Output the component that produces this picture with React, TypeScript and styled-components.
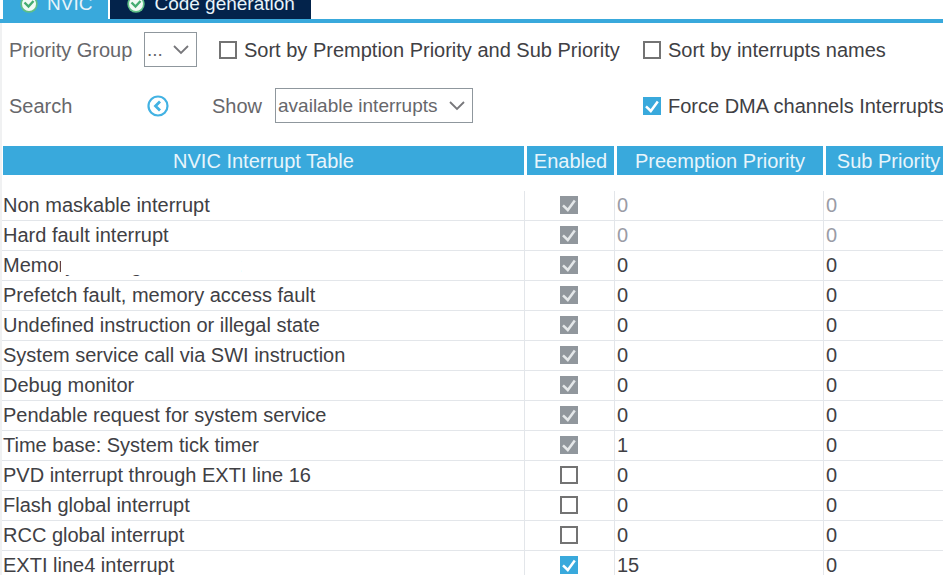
import React, { useState } from "react";
import styled, { createGlobalStyle } from "styled-components";

const BLUE = "#39a9dc";
const NAVY = "#03234b";
const INK = "#404044";
const MUTED = "#67676b";

const GlobalStyle = createGlobalStyle`
  *, *::before, *::after { box-sizing: border-box; }
  html, body { margin: 0; background: #fff; }
  body {
    font-family: "Liberation Sans", Arial, sans-serif;
    font-size: 20px;
    line-height: 24px;
    color: ${INK};
    overflow: hidden;
  }
`;

const TabStrip = styled.div`
  display: flex;
  align-items: flex-end;
  gap: 2px;
  height: 23px;
  padding-left: 3px;
  overflow: hidden;
  border-bottom: 4px solid ${BLUE};
`;

const Tab = styled.button<{ $active?: boolean }>`
  display: flex;
  flex: none;
  align-items: center;
  gap: 9px;
  height: 30px;
  padding: 0 16px 0 17px;
  border: 0;
  background: ${(p) => (p.$active ? BLUE : NAVY)};
  color: #e8f4fa;
  font: inherit;
  font-size: 19px;
  white-space: nowrap;
`;

const Panel = styled.main`
  border-left: 2px solid #f0f1f2;
`;

const Toolbar = styled.div`
  display: grid;
  grid-template-columns: 135px 68px 1fr 300px;
  row-gap: 21px;
  align-items: center;
  padding: 9px 0 23px 7px;
  white-space: nowrap;
`;

const Caption = styled.label`
  color: ${MUTED};
`;

const Group = styled.div`
  display: flex;
  align-items: center;
  gap: 13px;
`;

const Check = styled.label<{ $indent?: boolean }>`
  display: flex;
  align-items: center;
  gap: 7px;
  padding-left: ${(p) => (p.$indent ? 7 : 0)}px;
`;

const SelectBox = styled.span<{ $width: number }>`
  display: block;
  position: relative;
  width: ${(p) => p.$width}px;
  height: 35px;

  select {
    appearance: none;
    width: 100%;
    height: 100%;
    padding: 0 0 0 2px;
    border: 1px solid #8f979d;
    border-radius: 0;
    background: #fff;
    color: ${MUTED};
    font: inherit;
    font-size: 19px;
  }

  svg {
    position: absolute;
    top: 12px;
    right: 7px;
    pointer-events: none;
  }
`;

const IconButton = styled.button`
  display: flex;
  width: 22px;
  height: 22px;
  margin-left: 3px;
  padding: 0;
  border: 0;
  background: none;
`;

const TickHolder = styled.span<{ $centered?: boolean }>`
  display: grid;
  flex: none;
  width: 18px;
  height: 18px;
  margin: ${(p) => (p.$centered ? "0 auto" : "0")};

  input, svg { grid-area: 1 / 1; }
  svg { pointer-events: none; visibility: hidden; }
  input:checked + svg { visibility: visible; }

  input {
    appearance: none;
    width: 18px;
    height: 18px;
    margin: 0;
    border: 2px solid #737373;
    background: #fff;
  }
  input:checked { border: 0; background: ${BLUE}; }
  input:checked:disabled { background: #91979d; }
`;

const Table = styled.table`
  width: 100%;
  table-layout: fixed;
  border-collapse: separate;
  border-spacing: 0;
`;

const Column = styled.col<{ $width?: number }>`
  width: ${(p) => (p.$width ? `${p.$width}px` : "auto")};
`;

const HeadCell = styled.th`
  height: 45px;
  padding: 0;
  border: solid #fff;
  border-width: 0 1px 16px 2px;
  background: ${BLUE};
  color: #e8f5fb;
  font-weight: normal;
  white-space: nowrap;

  &:first-child { border-left-width: 1px; }
  &:last-child { border-right-width: 0; padding-left: 8px; }
`;

const Cell = styled.td<{ $center?: boolean; $dim?: boolean }>`
  height: 30px;
  padding: ${(p) => (p.$center ? "0 2px 2px 0" : "0 0 2px 2px")};
  border-right: 1px solid #e3e6ea;
  border-bottom: 1px solid #e3e6ea;
  color: ${(p) => (p.$dim ? "#9a9ca6" : INK)};
  white-space: nowrap;

  &:first-child { padding-left: 1px; }
  &:last-child { border-right: 0; }
`;

const Masked = styled.span`
  position: relative;

  &::after {
    content: "";
    position: absolute;
    inset: 0 0 1px 58px;
    background: #fff;
  }
`;

type TickProps = { checked: boolean; disabled?: boolean; label?: string; centered?: boolean };

function Tick({ checked, disabled, label, centered }: TickProps) {
  const [on, setOn] = useState(checked);
  return (
    <TickHolder $centered={centered}>
      <input
        type="checkbox"
        aria-label={label}
        checked={on}
        disabled={disabled}
        onChange={(e) => setOn(e.target.checked)}
      />
      <svg width="18" height="18" viewBox="0 0 18 18" fill="none">
        <path d="M3 9.3L7.8 14L14.8 4.5" stroke={disabled ? "#e4e7e9" : "#fff"} strokeWidth="2.5" />
      </svg>
    </TickHolder>
  );
}

function Chevron() {
  return (
    <svg width="18" height="11" viewBox="0 0 18 11" fill="none">
      <path d="M2 2L9 9L16 2" stroke="#77777b" strokeWidth="1.8" />
    </svg>
  );
}

function Badge() {
  return (
    <svg width="18" height="18" viewBox="0 0 18 18" fill="none">
      <circle cx="9" cy="9" r="8.7" fill="#5fbf86" />
      <circle cx="9" cy="9" r="7" fill="#f2fbf5" />
      <path d="M4.5 7.5L8.5 11.5L13.5 6" stroke="#45ac70" strokeWidth="2.4" />
    </svg>
  );
}

type Row = { name: string; on: boolean; locked?: boolean; dim?: boolean; pre: string; masked?: boolean };

const rows: Row[] = [
  { name: "Non maskable interrupt", on: true, locked: true, dim: true, pre: "0" },
  { name: "Hard fault interrupt", on: true, locked: true, dim: true, pre: "0" },
  { name: "Memory management fault", on: true, locked: true, pre: "0", masked: true },
  { name: "Prefetch fault, memory access fault", on: true, locked: true, pre: "0" },
  { name: "Undefined instruction or illegal state", on: true, locked: true, pre: "0" },
  { name: "System service call via SWI instruction", on: true, locked: true, pre: "0" },
  { name: "Debug monitor", on: true, locked: true, pre: "0" },
  { name: "Pendable request for system service", on: true, locked: true, pre: "0" },
  { name: "Time base: System tick timer", on: true, locked: true, pre: "1" },
  { name: "PVD interrupt through EXTI line 16", on: false, pre: "0" },
  { name: "Flash global interrupt", on: false, pre: "0" },
  { name: "RCC global interrupt", on: false, pre: "0" },
  { name: "EXTI line4 interrupt", on: true, pre: "15" },
];

export default function App() {
  return (
    <>
      <GlobalStyle />
      <TabStrip role="tablist">
        <Tab role="tab" aria-selected="true" $active><Badge />NVIC</Tab>
        <Tab role="tab" aria-selected="false"><Badge />Code generation</Tab>
      </TabStrip>
      <Panel>
        <Toolbar>
          <Caption htmlFor="group">Priority Group</Caption>
          <SelectBox $width={53}>
            <select id="group"><option>...</option></select>
            <Chevron />
          </SelectBox>
          <Check $indent><Tick checked={false} />Sort by Premption Priority and Sub Priority</Check>
          <Check><Tick checked={false} />Sort by interrupts names</Check>

          <Caption as="span">Search</Caption>
          <IconButton aria-label="Previous match">
            <svg width="22" height="22" viewBox="0 0 22 22" fill="none" stroke="#42b2e3">
              <circle cx="11" cy="11" r="9.5" strokeWidth="2.2" />
              <path d="M13 6.5L8.5 11L13 15.5" strokeWidth="2.8" />
            </svg>
          </IconButton>
          <Group>
            <Caption htmlFor="show">Show</Caption>
            <SelectBox $width={198}>
              <select id="show"><option>available interrupts</option></select>
              <Chevron />
            </SelectBox>
          </Group>
          <Check><Tick checked />Force DMA channels Interrupts</Check>
        </Toolbar>
        <Table>
          <colgroup>
            <Column />
            <Column $width={90} />
            <Column $width={209} />
            <Column $width={119} />
          </colgroup>
          <thead>
            <tr>
              <HeadCell>NVIC Interrupt Table</HeadCell>
              <HeadCell>Enabled</HeadCell>
              <HeadCell>Preemption Priority</HeadCell>
              <HeadCell>Sub Priority</HeadCell>
            </tr>
          </thead>
          <tbody>
            {rows.map((r) => (
              <tr key={r.name}>
                <Cell>{r.masked ? <Masked>{r.name}</Masked> : r.name}</Cell>
                <Cell $center><Tick centered checked={r.on} disabled={r.locked} label={`Enable ${r.name}`} /></Cell>
                <Cell $dim={r.dim}>{r.pre}</Cell>
                <Cell $dim={r.dim}>0</Cell>
              </tr>
            ))}
          </tbody>
        </Table>
      </Panel>
    </>
  );
}
